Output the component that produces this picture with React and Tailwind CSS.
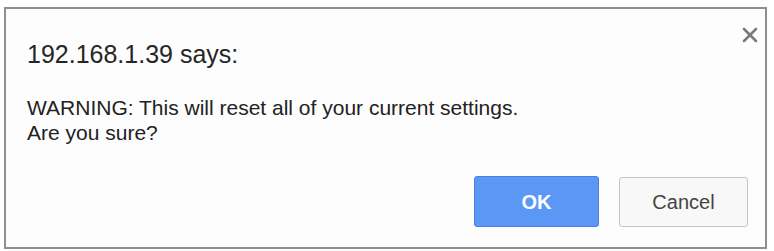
import { X } from 'lucide-react';

const App = () => {
  return (
    <div className="w-[774px] h-[251px] bg-white pt-[7px] pl-[4px]" style={{ fontFamily: '"Liberation Sans", Arial, sans-serif' }}>
      {/* Dialog */}
      <div className="relative w-[763px] h-[242px] border-2 border-[#8f8f8f] bg-[#fdfdfd] flex flex-col pl-[21px] pr-[17px] pt-[29px] pb-[20px]">
        <button className="absolute top-[14px] right-[3px] text-[#7a7a7a]">
          <X className="w-[24px] h-[24px]" strokeWidth={2.6} />
        </button>

        <h1 className="text-[25px] leading-[32px] text-[#262626]">192.168.1.39 says:</h1>

        <div className="mt-[25px] text-[21px] leading-[25px] text-[#222]">
          <p>WARNING: This will reset all of your current settings.</p>
          <p>Are you sure?</p>
        </div>

        {/* Actions */}
        <div className="mt-auto flex justify-end gap-[20px]">
          <button className="w-[125px] h-[51px] rounded-[3px] border border-[#4a80dc] bg-[#5b97f5] text-white text-[20px] font-bold">
            OK
          </button>
          <button className="w-[129px] h-[50px] mt-[1px] rounded-[3px] border border-[#c6c6c6] bg-[#f8f8f8] text-[#444] text-[20px]">
            Cancel
          </button>
        </div>
      </div>
    </div>
  );
};

export default App;
